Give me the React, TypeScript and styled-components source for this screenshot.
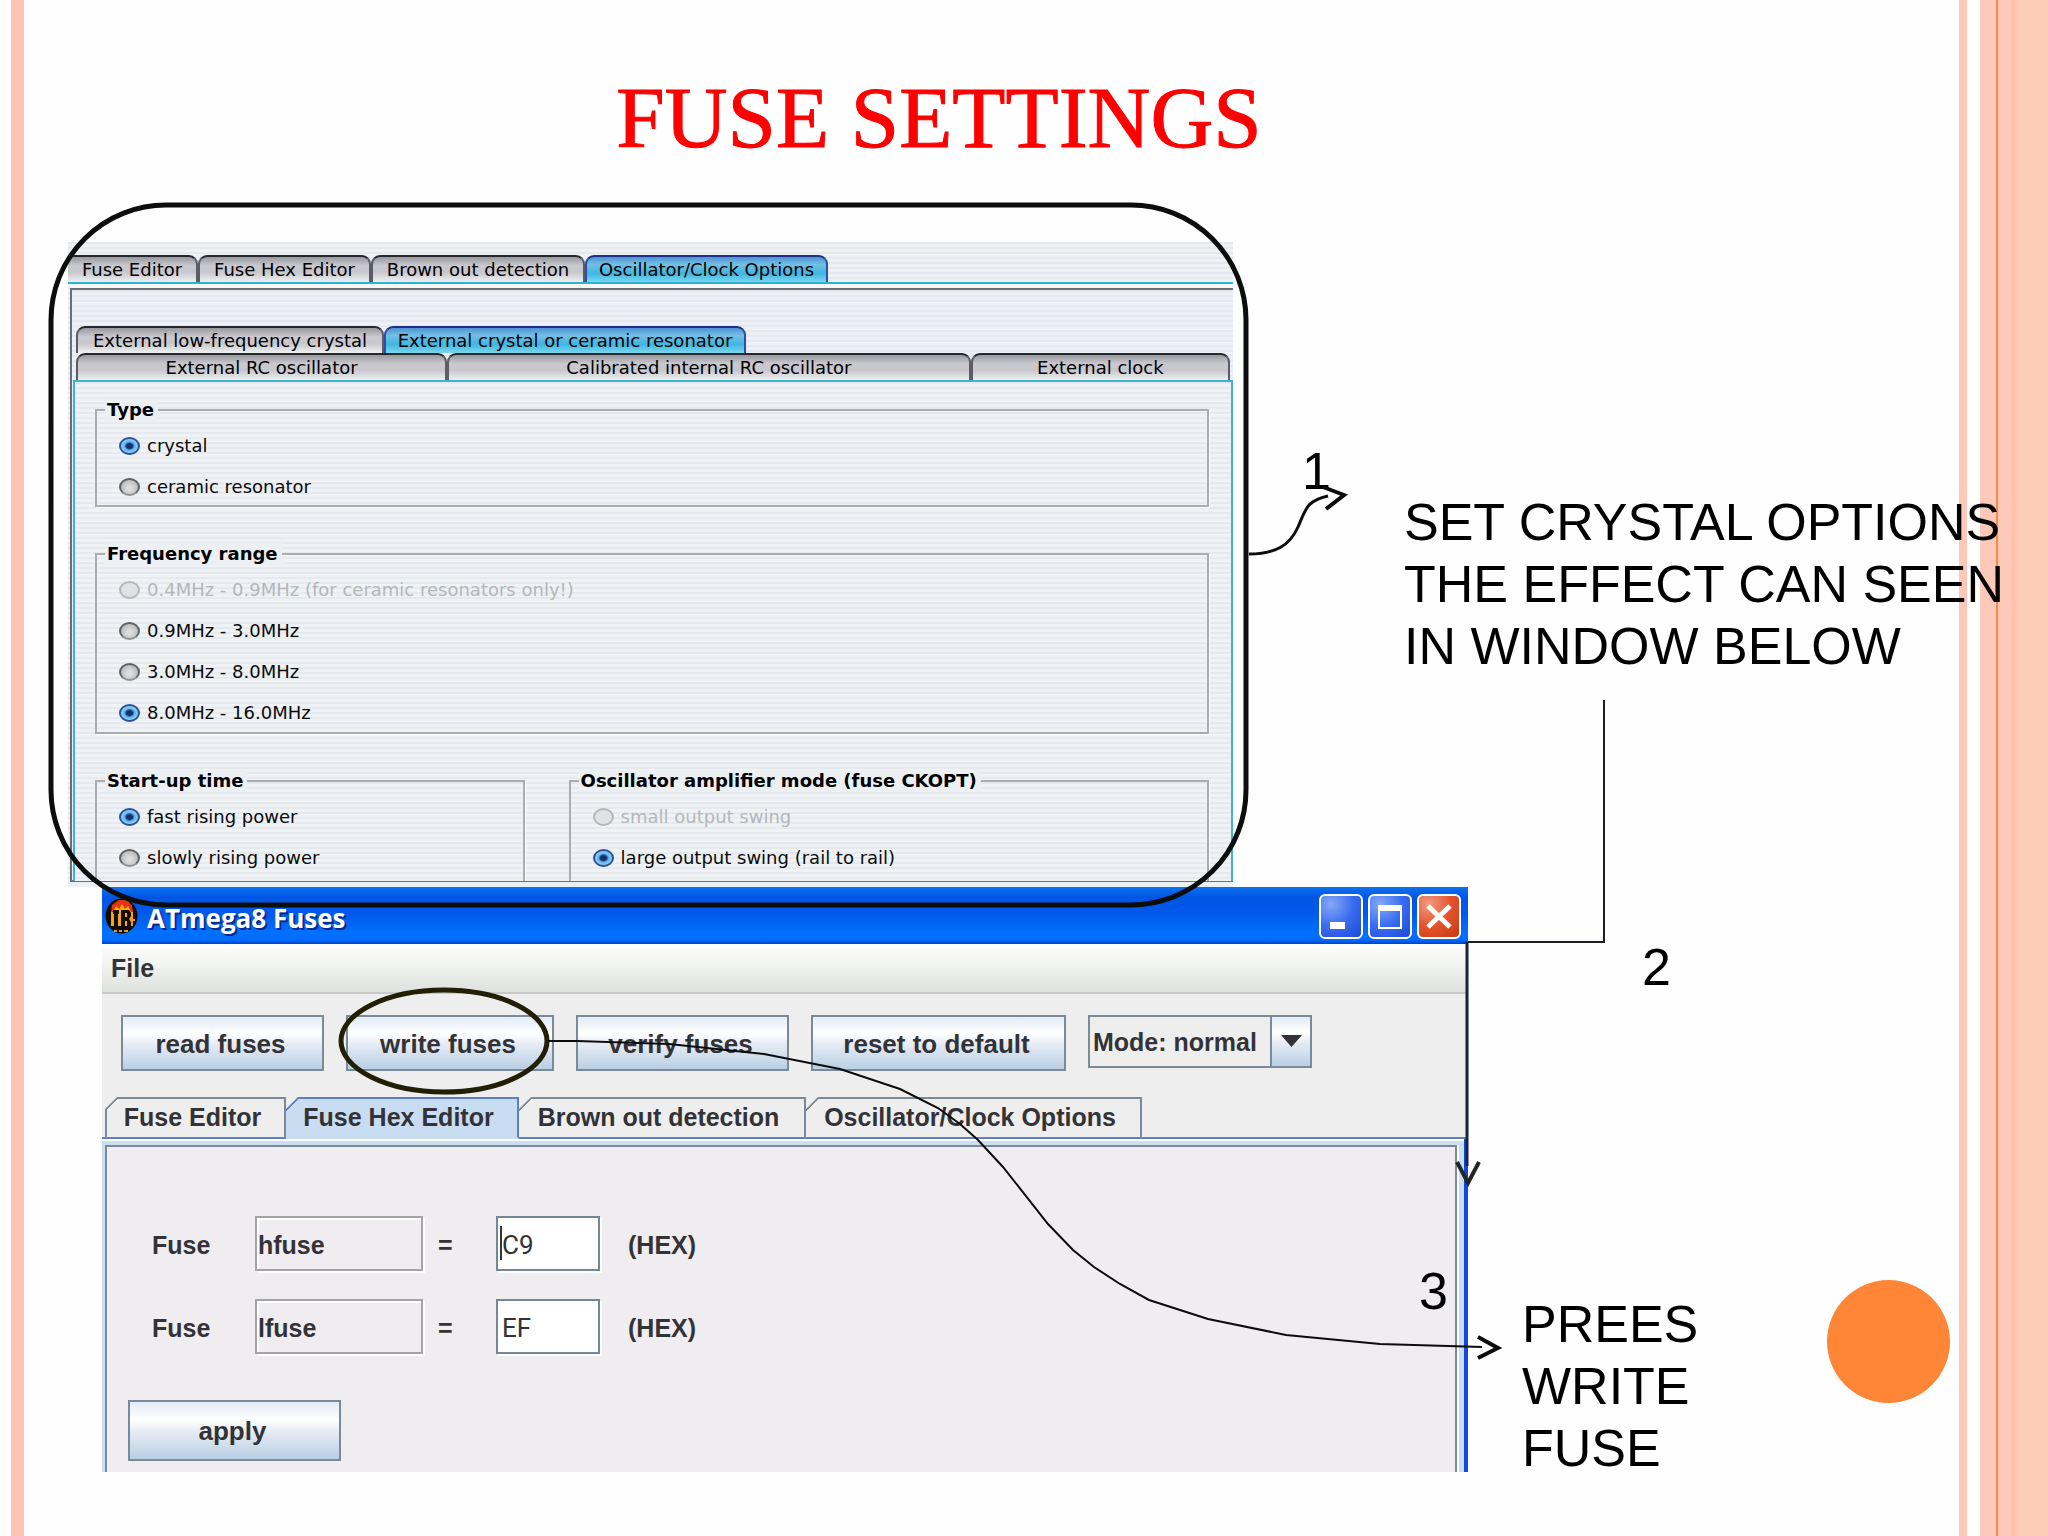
import React, { useState } from "react";
import styled, { createGlobalStyle, css } from "styled-components";

const sans = `"Liberation Sans", Arial, sans-serif`;
const wide = `"DejaVu Sans", Verdana, sans-serif`;

const GlobalStyle = createGlobalStyle`
  *, *::before, *::after { box-sizing: border-box; }
  body { margin: 0; background: #fdfefd; }
  button, input, select { font: inherit; color: inherit; margin: 0; }
`;

/* ---------- slide ---------- */

const Slide = styled.main`
  position: relative;
  min-height: 100vh;
  overflow: hidden;
  font-family: ${sans};
  color: #000;
  background:
    linear-gradient(90deg, transparent 11px, #ffc4b0 11px 24px, transparent 24px) left / 24px 100% no-repeat,
    linear-gradient(
        90deg,
        #fdc8b8 0 8px,
        #fff 8px 21px,
        #fdc9b8 21px 37px,
        #fb8a48 37px 39px,
        #fdc9b8 39px 53px,
        #fdbda0 53px,
        #fdccb5 60px
      )
      right / 89px 100% no-repeat,
    #fdfefd;
`;

const Title = styled.h1`
  margin: 0;
  padding: 66px 170px 72px 0;
  font: 400 87px/104px "Liberation Serif", "Times New Roman", serif;
  text-align: center;
  color: #fe0000;
  -webkit-text-stroke: 1px #fe0000;
`;

const TopRow = styled.section`
  display: grid;
  grid-template-columns: 1165fr 815fr;
  padding-left: 68px;
`;

const BottomRow = styled.section`
  display: grid;
  grid-template-columns: 1366fr 580fr;
  padding-left: 102px;
`;

const Step = styled.span`
  font-size: 52px;
  line-height: 62px;
`;

const Note = styled.p`
  margin: 0;
  font-size: 52px;
  line-height: 62px;
  white-space: nowrap;
`;

const TopNotes = styled.div`
  display: grid;
  grid-template-columns: 102px auto;
  align-content: start;
  padding: 198px 0 0 69px;

  ${Note} {
    padding-top: 51px;
  }
`;

const BottomNotes = styled.div`
  display: flex;
  flex-direction: column;
  padding: 49px 98px 0 54px;

  > ${Step} {
    padding-left: 120px;
  }
`;

const NoteAndDot = styled.div`
  display: flex;
  justify-content: space-between;
  margin-top: 282px;

  ${Note} {
    padding-top: 13px;
  }
`;

const Dot = styled.div`
  width: 123px;
  height: 123px;
  border-radius: 50%;
  background: #ff8637;
`;

const FloatingStep = styled(Step)`
  position: absolute;
  right: 600px;
  top: 1260px;
`;

const Drawing = styled.svg`
  position: absolute;
  inset: 0;
  width: 100%;
  height: 100%;
  pointer-events: none;
`;

/* ---------- oscillator panel ---------- */

const Panel = styled.div`
  height: 645px;
  overflow: hidden;
  padding-top: 13px;
  font-family: ${wide};
  font-size: 18px;
  line-height: 22px;
  background: repeating-linear-gradient(#e5e9ed 0 2px, #eff2f4 2px 5px);
`;

const GlossTab = styled.button<{ $w: number; $on?: boolean }>`
  flex: ${(p) => p.$w} 1 0;
  height: 27px;
  padding: 0;
  border: 2px solid #5c5c66;
  border-top-color: #26262c;
  border-bottom: 0;
  border-radius: 9px 9px 0 0;
  white-space: nowrap;
  background: linear-gradient(#98989f, #c9c9cf 35%, #c6c6cc 60%, #eef0f0);
  ${(p) =>
    p.$on &&
    css`
      border-color: #2b4ea8;
      border-top-color: #1d2f86;
      background: linear-gradient(#4d93d4, #74bfe4 30%, #3fb6e2 65%, #7ad6ee);
    `}
`;

const FixedTab = styled(GlossTab)`
  flex: none;
  width: ${(p) => p.$w}px;
`;

const MainTabs = styled.div`
  display: flex;
  border-bottom: 2px solid #2fb2da;

  > ${FixedTab}:first-child {
    border-left: 0;
    border-top-left-radius: 0;
  }
`;

const PanelFrame = styled.div`
  margin: 4px 0 0 2px;
  height: 594px;
  border: solid #6a6e76;
  border-width: 2px 0 2px 2px;
  padding-top: 36px;
  background: repeating-linear-gradient(#e5e7f1 0 2px, #eef0f8 2px 5px);
  box-shadow: 0 -4px #f6f8fa, 0 5px #edf0f2;
`;

const InnerTabs = styled.div`
  display: flex;
  padding: 0 3px 0 4px;
`;

const InnerBody = styled.div`
  height: 501px;
  margin-left: 1px;
  padding: 27px 22px 0 20px;
  overflow: hidden;
  border: 2px solid #3bb4d6;
  border-bottom: 0;
  background: repeating-linear-gradient(#e6eaee 0 2px, #f0f3f5 2px 5px);
`;

const Group = styled.fieldset<{ $h: number }>`
  position: relative;
  min-width: 0;
  height: ${(p) => p.$h}px;
  margin: 0 0 46px;
  padding: 14px 0 0 22px;
  border: 2px solid #a9adb3;
  box-shadow: 1px 1px #fff;
`;

/* The caption rides on the frame line and hides the piece behind it. */
const Caption = styled.legend`
  float: left;
  position: absolute;
  left: 8px;
  top: -12px;
  padding: 0 4px 0 2px;
  font-weight: 700;
  white-space: nowrap;
  background: #ecf0f2;
`;

const Choice = styled.label<{ $off?: boolean }>`
  display: flex;
  align-items: center;
  gap: 7px;
  height: 41px;
  white-space: nowrap;
  color: ${(p) => (p.$off ? "#b4b7bb" : "#0a0a0c")};
`;

const Radio = styled.input`
  appearance: none;
  flex: none;
  width: 21px;
  height: 18px;
  border: 2px solid #5e6166;
  border-bottom-color: #909398;
  border-radius: 50%;
  background: radial-gradient(ellipse at 50% 60%, #dcdcdc 20%, #b4b6b8 80%);

  &:checked {
    border-color: #2d4f9c;
    background: radial-gradient(ellipse, #16306e 0 3px, #5cb0ea 5px, #8ad0f8 8px);
  }
  &:disabled {
    border-color: #b4b6b9;
    background: #e0e2e4;
  }
`;

const SplitGroups = styled.div`
  display: grid;
  grid-template-columns: 430fr 641fr;
  column-gap: 44px;
`;

/* ---------- ATmega8 window ---------- */

const Win = styled.div`
  position: relative;
  display: flex;
  flex-direction: column;
  height: 585px;
  font-size: 25px;
  font-weight: 700;
  color: #333337;
  background: #eeeeef;
`;

const TitleBar = styled.header`
  display: flex;
  align-items: center;
  height: 57px;
  padding: 0 7px 0 3px;
  background: linear-gradient(#0a72f0, #0156e4 18%, #0158ea 45%, #0270ff 80%, #016cfb 93%, #003fd0);
`;

const WinName = styled.h2`
  flex: 1;
  margin: 0;
  padding: 4px 0 0 9px;
  font: 700 26px/32px "Open Sans", "Trebuchet MS", sans-serif;
  color: #fff;
  text-shadow: 2px 2px #0a2a8c;
`;

const WinButtons = styled.div`
  display: flex;
  gap: 5px;
  padding-top: 1px;
`;

const WinButton = styled.button<{ $close?: boolean }>`
  width: 44px;
  height: 45px;
  padding: 0;
  border: 2px solid #fff;
  border-radius: 6px;
  background: ${(p) =>
    p.$close
      ? "radial-gradient(circle at 25% 20%, #f09a80, #e4532c 50%, #c43a10)"
      : "radial-gradient(circle at 25% 20%, #86a8f8, #3a6cf0 50%, #1c48d8)"};
  svg {
    display: block;
    width: 40px;
    height: 41px;
  }
`;

const MenuBar = styled.nav`
  display: flex;
  align-items: center;
  height: 50px;
  padding-left: 9px;
  border-bottom: 2px solid #c8c9c9;
  background: linear-gradient(#fdfefd, #f2f4f1 40%, #dfe1de);
`;

const MenuItem = styled.button`
  border: 0;
  padding: 0;
  background: none;
`;

const Toolbar = styled.div`
  display: flex;
  gap: 22px;
  height: 103px;
  padding: 21px 0 0 19px;
`;

const MetalButton = styled.button<{ $w: number; $tall?: boolean }>`
  width: ${(p) => p.$w}px;
  height: ${(p) => (p.$tall ? 61 : 56)}px;
  padding: 2px 4px 0 0;
  border: 2px solid #7b8a99;
  font-size: 26px;
  white-space: nowrap;
  background: linear-gradient(#e2ecf6, #fff 32%, #e8edf6 50%, #b9cfe3);
`;

const ModeBox = styled.div`
  position: relative;
  width: 224px;
  height: 53px;
`;

const ModeSelect = styled.select`
  appearance: none;
  width: 100%;
  height: 100%;
  padding: 0 0 0 3px;
  border: 2px solid #7b8a99;
  border-radius: 0;
  font-weight: 700;
  background:
    linear-gradient(#7b8a99, #7b8a99) right 38px top / 2px 100% no-repeat,
    linear-gradient(#e2ecf6, #fff 32%, #e8edf6 50%, #b9cfe3) right / 38px 100% no-repeat,
    #eeeeef;
`;

const ModeArrow = styled.svg`
  position: absolute;
  right: 10px;
  top: 20px;
  width: 21px;
  height: 12px;
  pointer-events: none;
`;

const HexTabs = styled.div`
  display: flex;
  padding-left: 3px;
  height: 42px;
  background: linear-gradient(#5f7fc0, #5f7fc0) bottom / 100% 2px no-repeat;
`;

const HexTab = styled.button<{ $w: number; $on?: boolean }>`
  width: ${(p) => p.$w}px;
  height: 42px;
  padding: 0 6px 2px 0;
  border: 2px solid #7b8a99;
  border-left-width: 0;
  border-bottom-color: #5f7fc0;
  clip-path: polygon(12px 0, 100% 0, 100% 100%, 0 100%, 0 12px);
  background: linear-gradient(135deg, #7b8a99 0 10px, #eeeeee 10px) border-box;
  ${(p) =>
    p.$on &&
    css`
      border-color: #5f7fc0;
      border-bottom-color: #c8dcf2;
      background: linear-gradient(135deg, #5f7fc0 0 10px, #c8dcf2 10px) border-box;
    `}
  &:first-child {
    border-left-width: 2px;
  }
`;

const HexPane = styled.div`
  flex: 1;
  padding: 6px 7px 0 3px;
  border-right: 4px solid #1049e0;
  background: linear-gradient(#fff 2px, #cbdff0 2px);
`;

const HexForm = styled.form`
  height: 100%;
  padding: 69px 0 0 21px;
  border: solid #7b8a99;
  border-width: 2px 2px 0 2px;
  background: #efedef;
  box-shadow: 2px 0 #fff;
`;

const FuseRow = styled.div`
  display: grid;
  grid-template-columns: 103px 183px 58px 132px auto;
  align-items: center;
  height: 55px;
  margin-bottom: 28px;
  padding-left: 24px;

  > label,
  > span {
    padding-top: 3px;
  }
`;

const NameField = styled.input`
  width: 168px;
  height: 55px;
  padding: 3px 1px 0;
  border: 2px solid #a3a4a8;
  border-radius: 0;
  outline: 0;
  background: #efedef;
  box-shadow: inset 2px 2px #fff, 2px 2px #fff;
`;

const ValueField = styled.input`
  width: 104px;
  height: 55px;
  padding: 3px 4px 0;
  border: 2px solid #758797;
  border-radius: 0;
  outline: 0;
  font: 400 26px/30px Roboto, ${sans};
  background: #fff;
  box-shadow: 2px 2px #fff;
`;

const ValueCell = styled.div`
  position: relative;
`;

const Caret = styled.span`
  position: absolute;
  left: 4px;
  top: 10px;
  width: 2px;
  height: 34px;
  background: #333337;
`;

const ApplyArea = styled.div`
  padding-top: 18px;
`;

/* ---------- data ---------- */

type Option = { text: string; off?: boolean };

const typeOptions: Option[] = [{ text: "crystal" }, { text: "ceramic resonator" }];
const rangeOptions: Option[] = [
  { text: "0.4MHz - 0.9MHz (for ceramic resonators only!)", off: true },
  { text: "0.9MHz - 3.0MHz" },
  { text: "3.0MHz - 8.0MHz" },
  { text: "8.0MHz - 16.0MHz" },
];
const startOptions: Option[] = [{ text: "fast rising power" }, { text: "slowly rising power" }];
const swingOptions: Option[] = [
  { text: "small output swing", off: true },
  { text: "large output swing (rail to rail)" },
];

const hexTabs = [
  { text: "Fuse Editor", w: 181 },
  { text: "Fuse Hex Editor", w: 233 },
  { text: "Brown out detection", w: 287 },
  { text: "Oscillator/Clock Options", w: 336 },
];

function RadioGroup(props: { caption: string; name: string; options: Option[]; initial: number; height: number }) {
  const [picked, setPicked] = useState(props.initial);
  return (
    <Group $h={props.height}>
      <Caption>{props.caption}</Caption>
      {props.options.map((o, i) => (
        <Choice key={o.text} $off={o.off}>
          <Radio
            type="radio"
            name={props.name}
            disabled={o.off}
            checked={picked === i}
            onChange={() => setPicked(i)}
          />
          {o.text}
        </Choice>
      ))}
    </Group>
  );
}

function OscillatorPanel() {
  return (
    <Panel>
      <MainTabs role="tablist">
        <FixedTab role="tab" $w={130}>Fuse Editor</FixedTab>
        <FixedTab role="tab" $w={173}>Fuse Hex Editor</FixedTab>
        <FixedTab role="tab" $w={214}>Brown out detection</FixedTab>
        <FixedTab role="tab" $w={243} $on aria-selected>Oscillator/Clock Options</FixedTab>
      </MainTabs>
      <PanelFrame>
        <InnerTabs role="tablist">
          <FixedTab role="tab" $w={308}>External low-frequency crystal</FixedTab>
          <FixedTab role="tab" $w={362} $on aria-selected>External crystal or ceramic resonator</FixedTab>
        </InnerTabs>
        <InnerTabs role="tablist">
          <GlossTab role="tab" $w={371}>External RC oscillator</GlossTab>
          <GlossTab role="tab" $w={525}>Calibrated internal RC oscillator</GlossTab>
          <GlossTab role="tab" $w={258}>External clock</GlossTab>
        </InnerTabs>
        <InnerBody>
          <RadioGroup caption="Type" name="type" options={typeOptions} initial={0} height={98} />
          <RadioGroup caption="Frequency range" name="range" options={rangeOptions} initial={3} height={181} />
          <SplitGroups>
            <RadioGroup caption="Start-up time" name="start" options={startOptions} initial={0} height={140} />
            <RadioGroup
              caption="Oscillator amplifier mode (fuse CKOPT)"
              name="swing"
              options={swingOptions}
              initial={1}
              height={140}
            />
          </SplitGroups>
        </InnerBody>
      </PanelFrame>
    </Panel>
  );
}

function AppIcon() {
  return (
    <svg width="33" height="36" viewBox="0 0 33 36" aria-hidden="true">
      <ellipse cx="16.500" cy="18" rx="16" ry="17.500" fill="#140a04" />
      <path d="M6 14 7 7 11 4 14 2H20L24 4 27 8 28 14 24 15 10 15Z" fill="#e8330c" />
      <path d="M8 14 11 8 14 11 17 6 20 11 23 8 26 14Z" fill="#fbb018" />
      <path d="M6 14h22v14H6z" fill="#f0a818" />
      <path d="M8 12h6v4h-1v12h1v3H8v-3h1V16H8zM16 12h8l2 3v3l-2 3 2 3v4l-2 3h-8z" fill="#140a04" />
      <path d="M20 15h2v4h-2zM20 23h2v5h-2z" fill="#fbb018" />
      <path d="M26 18h2v3h2v2h-2v3h-2z" fill="#f59a14" />
      <path d="M9 32h3v2H9zM14 32h3v2h-3zM19 32h4v2h-4z" fill="#d99a20" />
    </svg>
  );
}

function FusesWindow() {
  const [hfuse, setHfuse] = useState("C9");
  const [lfuse, setLfuse] = useState("EF");
  return (
    <Win>
      <TitleBar>
        <AppIcon />
        <WinName>ATmega8 Fuses</WinName>
        <WinButtons>
          <WinButton aria-label="Minimize">
            <svg viewBox="0 0 40 41"><rect x="9" y="26" width="15" height="7" fill="#fff" /></svg>
          </WinButton>
          <WinButton aria-label="Maximize">
            <svg viewBox="0 0 40 41">
              <rect x="9" y="10" width="22" height="22" fill="none" stroke="#fff" strokeWidth="2" />
              <rect x="8" y="9" width="24" height="6" fill="#fff" />
            </svg>
          </WinButton>
          <WinButton aria-label="Close" $close>
            <svg viewBox="0 0 40 41"><path d="M9 10 31 31M31 10 9 31" stroke="#fff" strokeWidth="5" /></svg>
          </WinButton>
        </WinButtons>
      </TitleBar>
      <MenuBar>
        <MenuItem>File</MenuItem>
      </MenuBar>
      <Toolbar>
        <MetalButton $w={203}>read fuses</MetalButton>
        <MetalButton $w={208}>write fuses</MetalButton>
        <MetalButton $w={213}>verify fuses</MetalButton>
        <MetalButton $w={255}>reset to default</MetalButton>
        <ModeBox>
          <ModeSelect aria-label="Mode" defaultValue="normal">
            <option value="normal">Mode: normal</option>
            <option value="expert">Mode: expert</option>
          </ModeSelect>
          <ModeArrow viewBox="0 0 21 12"><path d="M0 0H21L10.500 12Z" fill="#333337" /></ModeArrow>
        </ModeBox>
      </Toolbar>
      <HexTabs role="tablist">
        {hexTabs.map((t, i) => (
          <HexTab key={t.text} role="tab" $w={t.w} $on={i === 1} aria-selected={i === 1}>{t.text}</HexTab>
        ))}
      </HexTabs>
      <HexPane>
        <HexForm onSubmit={(e) => e.preventDefault()}>
          <FuseRow>
            <label htmlFor="hname">Fuse</label>
            <NameField id="hname" readOnly value="hfuse" />
            <span>=</span>
            <ValueCell>
              <ValueField id="hval" value={hfuse} onChange={(e) => setHfuse(e.target.value)} />
              <Caret />
            </ValueCell>
            <label htmlFor="hval">(HEX)</label>
          </FuseRow>
          <FuseRow>
            <label htmlFor="lname">Fuse</label>
            <NameField id="lname" readOnly value="lfuse" />
            <span>=</span>
            <ValueCell>
              <ValueField id="lval" value={lfuse} onChange={(e) => setLfuse(e.target.value)} />
            </ValueCell>
            <label htmlFor="lval">(HEX)</label>
          </FuseRow>
          <ApplyArea>
            <MetalButton $w={213} $tall>apply</MetalButton>
          </ApplyArea>
        </HexForm>
      </HexPane>
    </Win>
  );
}

function Markup() {
  return (
    <Drawing viewBox="0 0 2048 1536" preserveAspectRatio="none" fill="none" aria-hidden="true">
      <rect x="51" y="205" width="1195" height="700" rx="115" stroke="#0c0e0e" strokeWidth="5" />
      <path d="M1249 554C1276 554 1290 545 1298 527S1306 501 1328 496" stroke="#0c0e0e" strokeWidth="3" />
      <path d="M1323 487 1344 495 1326 509" stroke="#0c0e0e" strokeWidth="4" />
      <path d="M1604 700V942H1468" stroke="#1c1f24" strokeWidth="2" />
      <path d="M1467 942V1166" stroke="#1a2238" strokeWidth="3" />
      <path d="M1457 1162 1468 1183 1479 1162" stroke="#222428" strokeWidth="4" />
      <ellipse cx="444" cy="1041" rx="103" ry="51" stroke="#221f04" strokeWidth="5" />
      <path
        d="M548 1041 577 1041 669 1044 764 1054 840 1069 900 1089 938 1108 960 1124 978 1140 1003 1167 1048 1224 1073 1250 1094 1267 1120 1284 1149 1300 1208 1319 1286 1335 1380 1344 1482 1347"
        stroke="#0c0c0c"
        strokeWidth="2"
      />
      <path d="M1478 1337 1498 1348 1478 1358" stroke="#0c0c0c" strokeWidth="4" />
    </Drawing>
  );
}

export default function App() {
  return (
    <Slide>
      <GlobalStyle />
      <Title>FUSE SETTINGS</Title>
      <TopRow>
        <OscillatorPanel />
        <TopNotes>
          <Step>1</Step>
          <Note>
            SET CRYSTAL OPTIONS
            <br />
            THE EFFECT CAN SEEN
            <br />
            IN WINDOW BELOW
          </Note>
        </TopNotes>
      </TopRow>
      <BottomRow>
        <FusesWindow />
        <BottomNotes>
          <Step>2</Step>
          <NoteAndDot>
            <Note>
              PREES
              <br />
              WRITE
              <br />
              FUSE
            </Note>
            <Dot />
          </NoteAndDot>
        </BottomNotes>
      </BottomRow>
      <FloatingStep>3</FloatingStep>
      <Markup />
    </Slide>
  );
}
